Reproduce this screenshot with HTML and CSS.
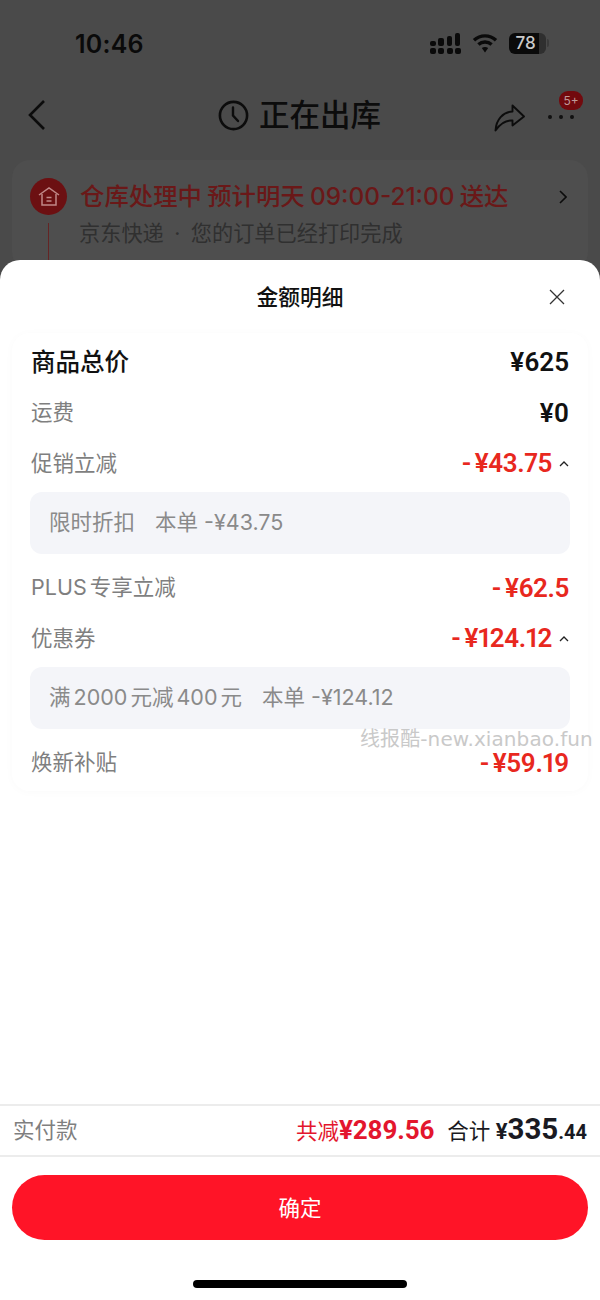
FILE: index.html
```html
<!DOCTYPE html>
<html lang="zh-CN">
<head>
<meta charset="utf-8">
<title>金额明细</title>
<link rel="stylesheet" href="styles.css">
</head>
<body>
<div class="phone">
  <div class="backdrop">
    <div class="status">
      <span class="time">10:46</span>
      <div class="status-icons">
        <svg class="signal" width="31" height="21" viewBox="0 0 31 21"><g fill="#0a0a0a"><rect x="0" y="8" width="6" height="5" rx="2"/><rect x="0" y="15" width="6" height="6" rx="2"/><rect x="8" y="5" width="6" height="8" rx="2"/><rect x="8" y="15" width="6" height="6" rx="2"/><rect x="17" y="3" width="5" height="10" rx="2"/><rect x="17" y="15" width="6" height="6" rx="2"/><rect x="25" y="0" width="5" height="13" rx="2"/><rect x="25" y="15" width="6" height="6" rx="2"/></g></svg>
        <svg class="wifi" width="26" height="20" viewBox="0 0 26 20"><g fill="none" stroke="#0a0a0a" stroke-width="3.4" stroke-linecap="butt"><path d="M2 7.2C8.2 1.4 17.8 1.4 24 7.2"/><path d="M6.4 11.6C10.2 8.2 15.8 8.2 19.6 11.6"/></g><path d="M9.8 15 13 19.4 16.2 15C14.3 13.6 11.7 13.6 9.8 15Z" fill="#0a0a0a"/></svg>
        <div class="battery"><span class="battery-fill">78</span><span class="battery-rest"></span><span class="battery-tip"></span></div>
      </div>
    </div>
    <div class="nav">
      <svg class="back" width="20" height="32" viewBox="0 0 20 32"><path d="M17 2 3 16 17 30" fill="none" stroke="#0c0c0c" stroke-width="2.6"/></svg>
      <div class="nav-title">
        <svg width="31" height="31" viewBox="0 0 31 31"><circle cx="15.5" cy="15.5" r="13.6" fill="none" stroke="#0c0c0c" stroke-width="2.6"/><path d="M15 7.5V15.5L20 21" fill="none" stroke="#0c0c0c" stroke-width="2.4" stroke-linecap="round"/></svg>
        <span>正在出库</span>
      </div>
      <div class="nav-actions">
        <svg class="share" width="31" height="28" viewBox="0 0 31 28"><path d="M18.5 1.5 30 12.5 18.5 21.5V16.5C11 16 6 20 1.5 26.5 2 15.5 9 8 18.5 7.5Z" fill="none" stroke="#0c0c0c" stroke-width="1.9" stroke-linejoin="round"/></svg>
        <div class="more"><i></i><i></i><i></i><span class="badge">5+</span></div>
      </div>
    </div>
    <div class="track">
      <div class="track-main">
        <div class="track-icon">
          <svg width="24" height="24" viewBox="0 0 24 24"><g fill="none" stroke="#c08888" stroke-width="1.5"><path d="M2 10 12 3 22 10"/><path d="M5 9V20H19V9"/><path d="M9.5 12.5H14.5M9.5 16H14.5"/></g></svg>
        </div>
        <span class="track-title">仓库处理中 预计明天 09:00-21:00 送达</span>
        <svg class="track-arrow" width="8" height="14" viewBox="0 0 8 14"><path d="M1 1 7 7 1 13" fill="none" stroke="#0c0c0c" stroke-width="1.6"/></svg>
      </div>
      <div class="track-sub">
        <span class="track-line"></span>
        <span class="track-text">京东快递 · 您的订单已经打印完成</span>
      </div>
    </div>
  </div>

  <div class="sheet">
    <div class="sheet-head">
      <h1>金额明细</h1>
      <svg class="close" width="16" height="16" viewBox="0 0 16 16"><path d="M1 1 15 15M15 1 1 15" stroke="#333" stroke-width="1.3" fill="none"/></svg>
    </div>
    <div class="detail">
      <div class="row"><span class="label-strong">商品总价</span><span class="amount">¥625</span></div>
      <div class="row"><span class="label">运费</span><span class="amount">¥0</span></div>
      <div class="row"><span class="label">促销立减</span><span class="amount red caret">- ¥43.75<svg width="10" height="6" viewBox="0 0 10 6"><path d="M1 5 5 1 9 5" fill="none" stroke="#222" stroke-width="1.3"/></svg></span></div>
      <div class="note"><span>限时折扣</span><span>本单 -¥43.75</span></div>
      <div class="row"><span class="label tight">PLUS 专享立减</span><span class="amount red">- ¥62.5</span></div>
      <div class="row"><span class="label">优惠券</span><span class="amount red caret">- ¥124.12<svg width="10" height="6" viewBox="0 0 10 6"><path d="M1 5 5 1 9 5" fill="none" stroke="#222" stroke-width="1.3"/></svg></span></div>
      <div class="note"><span class="tight">满 2000 元减 400 元</span><span>本单 -¥124.12</span></div>
      <div class="row"><span class="label">焕新补贴</span><span class="amount red">- ¥59.19</span></div>
      <span class="watermark">线报酷-new.xianbao.fun</span>
    </div>
    <div class="summary">
      <span class="summary-label">实付款</span>
      <div class="summary-values">
        <span class="saved">共减<b>¥289.56</b></span>
        <span class="total">合计 <b class="yen">¥</b><b class="int">335</b><b class="dec">.44</b></span>
      </div>
    </div>
    <div class="actions">
      <button class="confirm" type="button">确定</button>
    </div>
    <div class="home-bar"></div>
  </div>
</div>
</body>
</html>
```
FILE: styles.css
```css
* { box-sizing: border-box; }
html, body { margin: 0; padding: 0; }
body {
  width: 600px;
  height: 1300px;
  overflow: hidden;
  background: #4a4a4a;
  font-family: "Inter", "Noto Sans CJK SC", sans-serif;
}
.phone { display: flex; flex-direction: column; width: 600px; height: 1300px; }
.backdrop { height: 260px; flex: none; overflow: hidden; background: #4a4a4a; }

.status { display: flex; justify-content: space-between; align-items: center; height: 44px; margin-top: 22px; padding: 0 49px 0 75px; }
.time { font-size: 25px; font-weight: 600; color: #0a0a0a; letter-spacing: .2px; }
.status-icons { display: flex; align-items: center; gap: 11px; margin-top: -2px; }
.battery { display: flex; align-items: center; width: 42px; height: 21px; }
.battery-fill { width: 30px; height: 21px; background: #0a0a0a; border-radius: 6px 0 0 6px; color: #c9c9c9; font-size: 17px; font-weight: 500; line-height: 21px; text-align: center; padding-left: 3px; }
.battery-rest { width: 7px; height: 21px; background: #2f2f2f; border-radius: 0 6px 6px 0; }
.battery-tip { width: 2px; height: 8px; margin-left: 1px; background: #3a3a3a; border-radius: 0 2px 2px 0; }

.nav { display: flex; align-items: center; justify-content: space-between; height: 60px; margin-top: 19px; padding: 0 27px 0 27px; position: relative; }
.nav-title { position: absolute; left: 218px; top: 8px; display: flex; align-items: center; gap: 10px; font-size: 30.5px; font-weight: 500; color: #0c0c0c; line-height: 44px; }
.nav-actions { display: flex; align-items: center; gap: 23px; margin-top: 3px; }
.share { margin-top: 2px; }
.more { position: relative; display: flex; gap: 7.5px; width: 26px; margin-right: -1px; }
.more i { width: 4px; height: 4px; border-radius: 50%; background: #111; }
.badge { position: absolute; left: 11px; top: -24px; width: 24px; height: 19px; border-radius: 9px; background: #720a0e; color: #c09898; font-size: 12px; line-height: 19px; text-align: center; }

.track { height: 110px; margin: 15px 12px 0; padding: 18px 18px 0 18px; background: #4e4e4e; border-radius: 18px; }
.track-main { display: flex; align-items: center; height: 37px; }
.track-icon { display: flex; align-items: center; justify-content: center; width: 37px; height: 37px; border-radius: 50%; background: #6c1012; flex: none; }
.track-title { margin-left: 13px; font-size: 24.4px; font-weight: 500; color: #6a1818; white-space: nowrap; line-height: 37px; word-spacing: -1.3px; }
.track-arrow { margin-left: auto; margin-right: 3px; }
.track-sub { display: flex; font-size: 21.2px; color: #303030; height: 40px; }
.track-line { width: 1px; height: 40px; margin: 8px 30px 0 18px; background: #642424; flex: none; }
.track-text { line-height: 36px; word-spacing: 4.5px; }

.sheet { position: relative; flex: 1; display: flex; flex-direction: column; background: #fff; border-radius: 20px 20px 0 0; }
.sheet-head { position: relative; display: flex; align-items: center; justify-content: center; height: 73px; flex: none; }
.sheet-head h1 { margin: 0; padding-top: 1px; font-size: 21.75px; font-weight: 500; color: #111; line-height: 72px; }
.close { position: absolute; right: 35px; top: 29px; }

.detail { position: relative; height: 458px; flex: none; margin: 0 12px; padding: 4px 18px 0; border-radius: 18px; box-shadow: 0 1px 10px rgba(0, 0, 0, .025); }
.row { display: flex; align-items: center; justify-content: space-between; height: 50.5px; padding-left: 1px; }
.label { padding-bottom: 4px; font-size: 21.5px; color: #7f7f7f; }
.label-strong { padding-bottom: 4px; font-size: 24.5px; font-weight: 500; color: #111; }
.tight { word-spacing: -3px; }
.amount { font-family: "Roboto", "Noto Sans CJK SC", sans-serif; font-size: 26px; line-height: 24px; font-weight: 600; color: #111; white-space: nowrap; word-spacing: -2px; padding-right: 1px; font-variant-numeric: proportional-nums; }
.red { color: #e8281e; letter-spacing: -.4px; }
.caret { display: flex; align-items: center; gap: 7px; }
.caret svg { margin-top: 1px; }
.note { display: flex; gap: 20px; align-items: center; height: 62px; margin: 3px 0 9px; padding: 0 19px 4px; background: #f4f5f9; border-radius: 12px; font-size: 21.5px; color: #8a8a8a; }
.watermark { position: absolute; left: 348px; top: 396px; font-family: "DejaVu Sans", "Noto Sans CJK SC", sans-serif; font-size: 20px; color: #c9c9c9; white-space: nowrap; line-height: 20px; letter-spacing: .1px; }

.summary { display: flex; align-items: center; justify-content: space-between; height: 53px; flex: none; margin-top: 313px; padding: 0 13px 4px; border-top: 2px solid #ececec; border-bottom: 2px solid #ececec; }
.summary-label { font-size: 21.5px; color: #7f7f7f; }
.summary-values { display: flex; align-items: baseline; gap: 13px; font-family: "Roboto", "Noto Sans CJK SC", sans-serif; }
.saved { font-size: 21.5px; color: #e3162d; }
.saved b { font-size: 26px; font-weight: 700; letter-spacing: -.1px; }
.total { font-size: 21.5px; color: #1a1a22; }
.total b { font-weight: 700; }
.yen { font-size: 22px; }
.int { font-size: 29.5px; }
.dec { font-size: 20px; }

.actions { padding: 18px 12px 0; flex: none; }
.confirm { display: block; width: 100%; height: 65px; padding: 0 0 2px; border: 0; border-radius: 33px; background: #ff1427; color: #fff; font-family: inherit; font-size: 21.5px; }
.home-bar { width: 214px; height: 8px; margin: 40px auto 0; background: #000; border-radius: 4px; flex: none; }
```
